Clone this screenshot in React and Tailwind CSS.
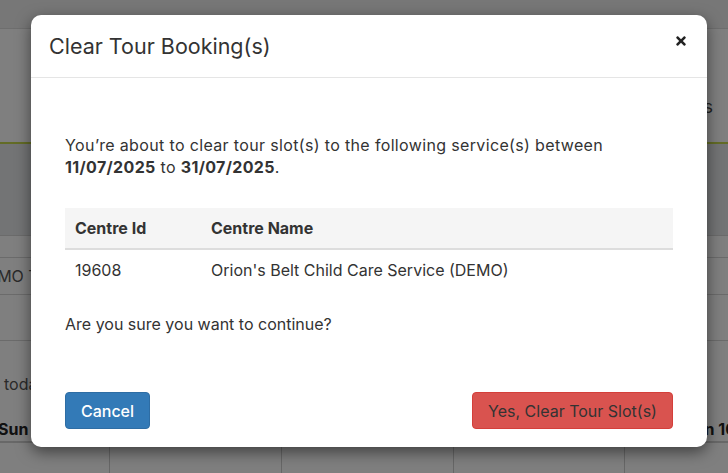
import React from 'react';
import { FaTimes } from 'react-icons/fa';

const font = { fontFamily: 'Inter, "Noto Sans", sans-serif' };

// Calendar page sitting behind the modal
const BackgroundPage = () => (
  <div className="w-full h-full bg-white text-[#333]">
    <div className="h-[29px] bg-[#eeeeee] border-b border-[#dddddd]" />
    <div className="h-[115px] bg-white border-b-2 border-[#c6d84c] flex items-center justify-end pr-[15px] pt-[42px]">
      <span className="text-[18px] text-[#444]">Tour Settings</span>
    </div>
    <div className="h-[92px] bg-[#e6e8ea] border-b border-[#d6d6d6]" />
    <div className="h-[22px] border-b border-[#d6d6d6]" />
    <div className="h-[37px] border-b border-[#d6d6d6] flex items-center">
      <span className="ml-[-24px] text-[16px] text-[#555]">DEMO Tours</span>
    </div>
    <div className="h-[46px] border-b border-[#d6d6d6]" />
    <div className="h-[75px] flex items-center pt-[10px]">
      <span className="ml-[4px] text-[16px] text-[#555]">today</span>
    </div>
    <div className="h-[27px] border-b-2 border-[#d0d0d0] flex items-center justify-between">
      <span className="text-[16px] font-bold text-[#222] ml-[-2px]">Sun 06/07</span>
      <span className="text-[16px] font-bold text-[#222] mr-[-34px]">Sun 10/07</span>
    </div>
    <div className="flex h-[40px]">
      <div className="w-[110px] border-r border-[#cfcfcf]" />
      <div className="w-[172px] border-r border-[#cfcfcf]" />
      <div className="w-[172px] border-r border-[#cfcfcf]" />
      <div className="w-[171px] border-r border-[#cfcfcf]" />
      <div className="flex-1" />
    </div>
  </div>
);

const ClearTourModal = () => (
  <div className="absolute inset-0 bg-black/50 pt-[15px] pl-[31px]">
    <div className="w-[676px] h-[432px] bg-white rounded-[10px] shadow-[0_5px_15px_rgba(0,0,0,0.5)] flex flex-col text-[#333]">
      {/* Header */}
      <div className="h-[63px] flex items-center justify-between pl-[18px] pr-[19px] border-b border-[#e5e5e5] shrink-0">
        <h4 className="text-[21.5px] text-[#333] pt-[1px]">Clear Tour Booking(s)</h4>
        <FaTimes className="w-[14px] h-[14px] text-[#222] mb-[10px]" />
      </div>

      {/* Body */}
      <div className="flex-1 px-[34px] pt-[56px]">
        <p className="text-[16px] leading-[22px] tracking-[0.35px] max-w-[545px]">
          You’re about to clear tour slot(s) to the following service(s) between{' '}
          <b className="font-bold">11/07/2025</b> to <b className="font-bold">31/07/2025</b>.
        </p>

        <table className="w-full mt-[30px] text-[16px] text-left">
          <thead>
            <tr className="bg-[#f5f5f5] border-b-2 border-[#dddddd] h-[41px]">
              <th className="w-[136px] px-[10px] font-bold">Centre Id</th>
              <th className="px-[10px] font-bold">Centre Name</th>
            </tr>
          </thead>
          <tbody>
            <tr className="h-[41px]">
              <td className="px-[10px]">19608</td>
              <td className="px-[10px]">Orion's Belt Child Care Service (DEMO)</td>
            </tr>
          </tbody>
        </table>

        <p className="text-[16px] leading-[22px] mt-[23px]">Are you sure you want to continue?</p>
      </div>

      {/* Footer */}
      <div className="flex items-center justify-between px-[34px] pb-[18px] shrink-0">
        <button
          type="button"
          className="w-[85px] h-[37px] rounded-[4px] bg-[#337ab7] border border-[#2e6da4] text-white text-[16px] font-medium"
        >
          Cancel
        </button>
        <button
          type="button"
          className="w-[201px] h-[37px] rounded-[4px] bg-[#d9534f] border border-[#d43f3a] text-[#333] text-[16px]"
        >
          Yes, Clear Tour Slot(s)
        </button>
      </div>
    </div>
  </div>
);

export default function App() {
  return (
    <div className="relative w-[728px] h-[473px] overflow-hidden" style={font}>
      <BackgroundPage />
      <ClearTourModal />
    </div>
  );
}
